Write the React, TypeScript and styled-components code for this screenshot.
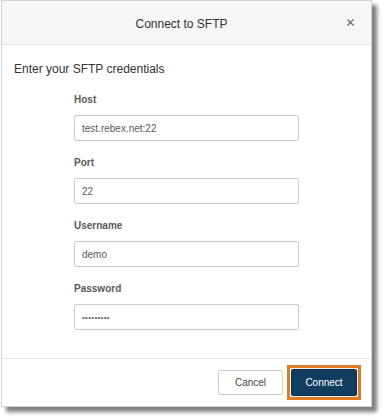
import React from "react";
import styled, { createGlobalStyle } from "styled-components";

const Global = createGlobalStyle`
  html, body { margin: 0; padding: 0; background: #ffffff; }
  body { font-family: "Liberation Sans", Arial, sans-serif; }
  * { box-sizing: border-box; }
`;

const Page = styled.div`
  width: 384px;
  height: 420px;
  padding-left: 1px;
`;

const Dialog = styled.div`
  width: 371px;
  background: #ffffff;
  border: 1px solid #d4d4d4;
  box-shadow: 5px 5px 4px rgba(0, 0, 0, 0.5);
  display: flex;
  flex-direction: column;
`;

const Header = styled.div`
  position: relative;
  height: 44px;
  background: #f6f6f6;
  border-bottom: 1px solid #e3e3e3;
  display: flex;
  align-items: center;
  justify-content: center;
`;

const Title = styled.div`
  font-size: 12px;
  color: #333333;
  margin-top: 2px;
  margin-right: 10px;
`;

const Close = styled.button`
  position: absolute;
  right: 16px;
  top: 17px;
  width: 9px;
  height: 9px;
  padding: 0;
  border: 0;
  background: transparent;
  display: flex;
  align-items: center;
  justify-content: center;
`;

const Body = styled.div`
  padding: 17px 0 28px 12px;
`;

const Intro = styled.div`
  font-size: 12px;
  line-height: 14px;
  color: #333333;
`;

const Form = styled.div`
  margin-top: 18px;
  margin-left: 60px;
  width: 225px;
  display: flex;
  flex-direction: column;
  gap: 16px;
`;

const Field = styled.div`
  display: flex;
  flex-direction: column;
  gap: 9px;
`;

const Label = styled.div`
  font-size: 10px;
  line-height: 12px;
  font-weight: bold;
  color: #595959;
`;

const Input = styled.div`
  height: 26px;
  border: 1px solid #cccccc;
  border-radius: 2px;
  padding-left: 7px;
  display: flex;
  align-items: center;
  font-size: 10px;
  color: #5a5a5a;
`;

const Dots = styled.span`
  font-size: 8px;
  letter-spacing: 0.3px;
  color: #666666;
`;

const Footer = styled.div`
  border-top: 1px solid #e3e3e3;
  padding: 6px 10px 6px 0;
  display: flex;
  justify-content: flex-end;
  align-items: center;
  gap: 4px;
`;

const Button = styled.button<{ $primary?: boolean }>`
  font-family: "Liberation Sans", Arial, sans-serif;
  font-size: 10px;
  height: ${(p) => (p.$primary ? "27px" : "25px")};
  width: ${(p) => (p.$primary ? "66px" : "65px")};
  border-radius: 2px;
  border: 1px solid ${(p) => (p.$primary ? "#0f3657" : "#cccccc")};
  background: ${(p) => (p.$primary ? "#113d60" : "#ffffff")};
  color: ${(p) => (p.$primary ? "#ffffff" : "#444444")};
  padding: 0;
  display: block;
`;

const FocusRing = styled.span`
  display: flex;
  border: 3px solid #e07b22;
  padding: 1px;
  background: #f6efe8;
`;

const fields = [
  { label: "Host", value: "test.rebex.net:22" },
  { label: "Port", value: "22" },
  { label: "Username", value: "demo" },
];

export default function App() {
  return (
    <Page>
      <Global />
      <Dialog>
        <Header>
          <Title>Connect to SFTP</Title>
          <Close aria-label="close">
            <svg width="7" height="7" viewBox="0 0 7 7">
              <path d="M0.5 0.5 L6.5 6.5 M6.5 0.5 L0.5 6.5" stroke="#666" strokeWidth="1.1" />
            </svg>
          </Close>
        </Header>
        <Body>
          <Intro>Enter your SFTP credentials</Intro>
          <Form>
            {fields.map((f) => (
              <Field key={f.label}>
                <Label>{f.label}</Label>
                <Input>{f.value}</Input>
              </Field>
            ))}
            <Field>
              <Label>Password</Label>
              <Input>
                <Dots>•••••••••</Dots>
              </Input>
            </Field>
          </Form>
        </Body>
        <Footer>
          <Button>Cancel</Button>
          <FocusRing>
            <Button $primary>Connect</Button>
          </FocusRing>
        </Footer>
      </Dialog>
    </Page>
  );
}
